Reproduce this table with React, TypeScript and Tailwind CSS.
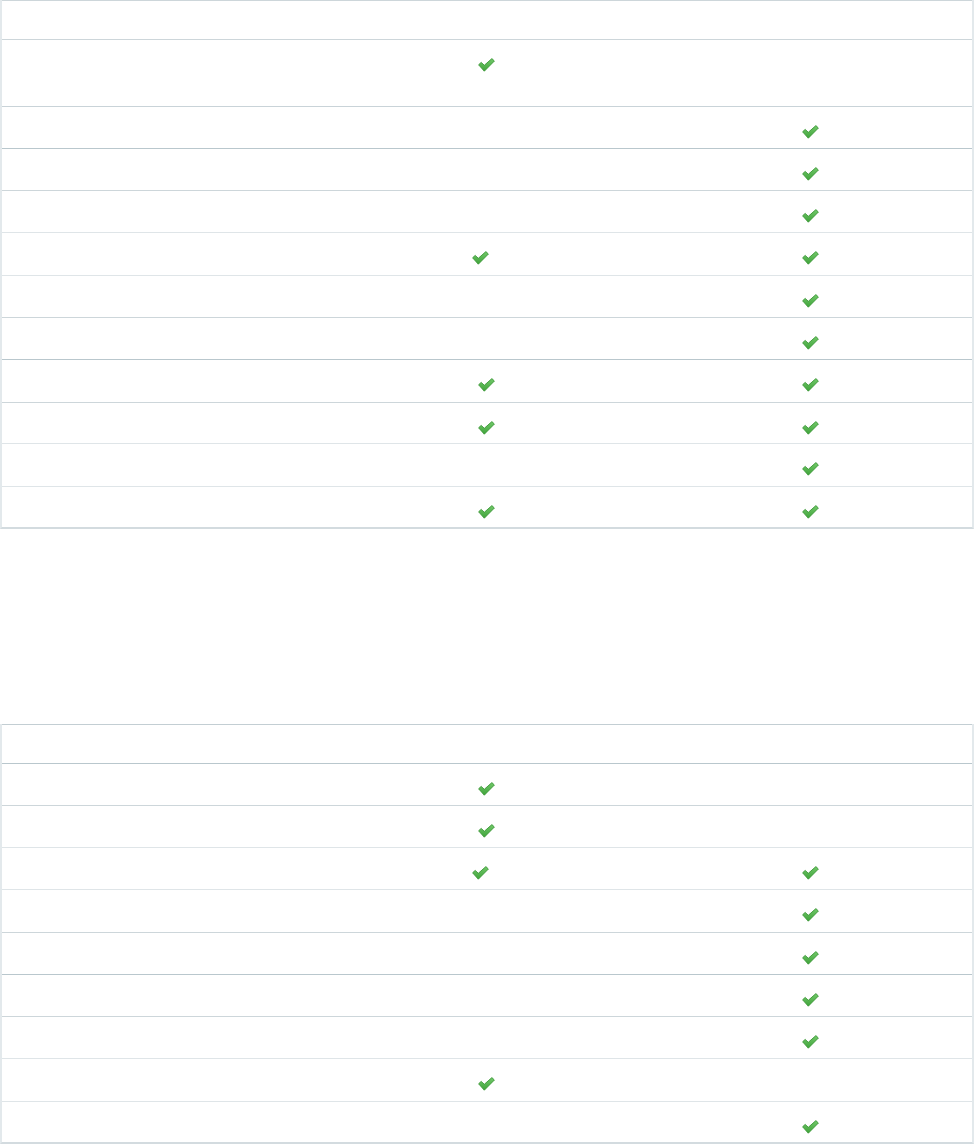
import React from "react";

type Row = { h: string; b: string; c2?: boolean; c3?: boolean; s?: boolean };

function Check({ shift }: { shift?: boolean }) {
  return (
    <svg
      width="17"
      height="14"
      viewBox="0 0 17 14"
      className={shift ? "mr-3 block" : "block"}
    >
      <defs>
        <linearGradient id="cg" x1="0" y1="0" x2="0" y2="1">
          <stop offset="0" stopColor="#72c96a" />
          <stop offset="1" stopColor="#3fa33a" />
        </linearGradient>
      </defs>
      <polygon
        points="0.6,6.8 3.2,4.4 6.3,7.3 13.9,0.6 16.4,3 6.3,13.2"
        fill="url(#cg)"
        stroke="#3b9637"
        strokeWidth="0.9"
        strokeLinejoin="round"
      />
    </svg>
  );
}

function Table({ rows, bottom }: { rows: Row[]; bottom: string }) {
  return (
    <div className={`w-full border-l-2 border-r-2 border-l-[#e3e9ec] border-r-[#e3e9ec] border-b-2 ${bottom}`}>
      {rows.map((r, i) => (
        <div key={i} className={`grid grid-cols-3 border-t ${r.h} ${r.b}`}>
          <div />
          <div className="flex justify-center pt-[18px]">
            {r.c2 ? <Check shift={r.s} /> : null}
          </div>
          <div className="flex justify-center pt-[18px]">
            {r.c3 ? <Check /> : null}
          </div>
        </div>
      ))}
    </div>
  );
}

const t1: Row[] = [
  { h: "h-[39px]", b: "border-t-[#cdd6da]" },
  { h: "h-[67px]", b: "border-t-[#cdd6da]", c2: true },
  { h: "h-[42px]", b: "border-t-[#c9d3d8]", c3: true },
  { h: "h-[42px]", b: "border-t-[#b9c7cd]", c3: true },
  { h: "h-[42px]", b: "border-t-[#cdd6da]", c3: true },
  { h: "h-[43px]", b: "border-t-[#dfe5e8]", c2: true, c3: true, s: true },
  { h: "h-[42px]", b: "border-t-[#dfe5e8]", c3: true },
  { h: "h-[42px]", b: "border-t-[#cdd6da]", c3: true },
  { h: "h-[43px]", b: "border-t-[#b9c7cd]", c2: true, c3: true },
  { h: "h-[41px]", b: "border-t-[#cdd6da]", c2: true, c3: true },
  { h: "h-[43px]", b: "border-t-[#dfe5e8]", c3: true },
  { h: "h-[41px]", b: "border-t-[#dfe5e8]", c2: true, c3: true },
];

const t2: Row[] = [
  { h: "h-[39px]", b: "border-t-[#c3ced3]" },
  { h: "h-[42px]", b: "border-t-[#b9c7cd]", c2: true },
  { h: "h-[42px]", b: "border-t-[#cdd6da]", c2: true },
  { h: "h-[42px]", b: "border-t-[#dfe5e8]", c2: true, c3: true, s: true },
  { h: "h-[43px]", b: "border-t-[#dfe5e8]", c3: true },
  { h: "h-[42px]", b: "border-t-[#cdd6da]", c3: true },
  { h: "h-[42px]", b: "border-t-[#b9c7cd]", c3: true },
  { h: "h-[42px]", b: "border-t-[#cdd6da]", c3: true },
  { h: "h-[43px]", b: "border-t-[#dfe5e8]", c2: true },
  { h: "h-[41px]", b: "border-t-[#dfe5e8]", c3: true },
];

export default function App() {
  return (
    <div className="w-[974px] min-h-[1144px] bg-white font-['Liberation_Sans',Arial,sans-serif]">
      <Table rows={t1} bottom="border-b-[#d3dbdf]" />
      <div className="h-[195px]" />
      <Table rows={t2} bottom="border-b-[#d3dbdf]" />
    </div>
  );
}
